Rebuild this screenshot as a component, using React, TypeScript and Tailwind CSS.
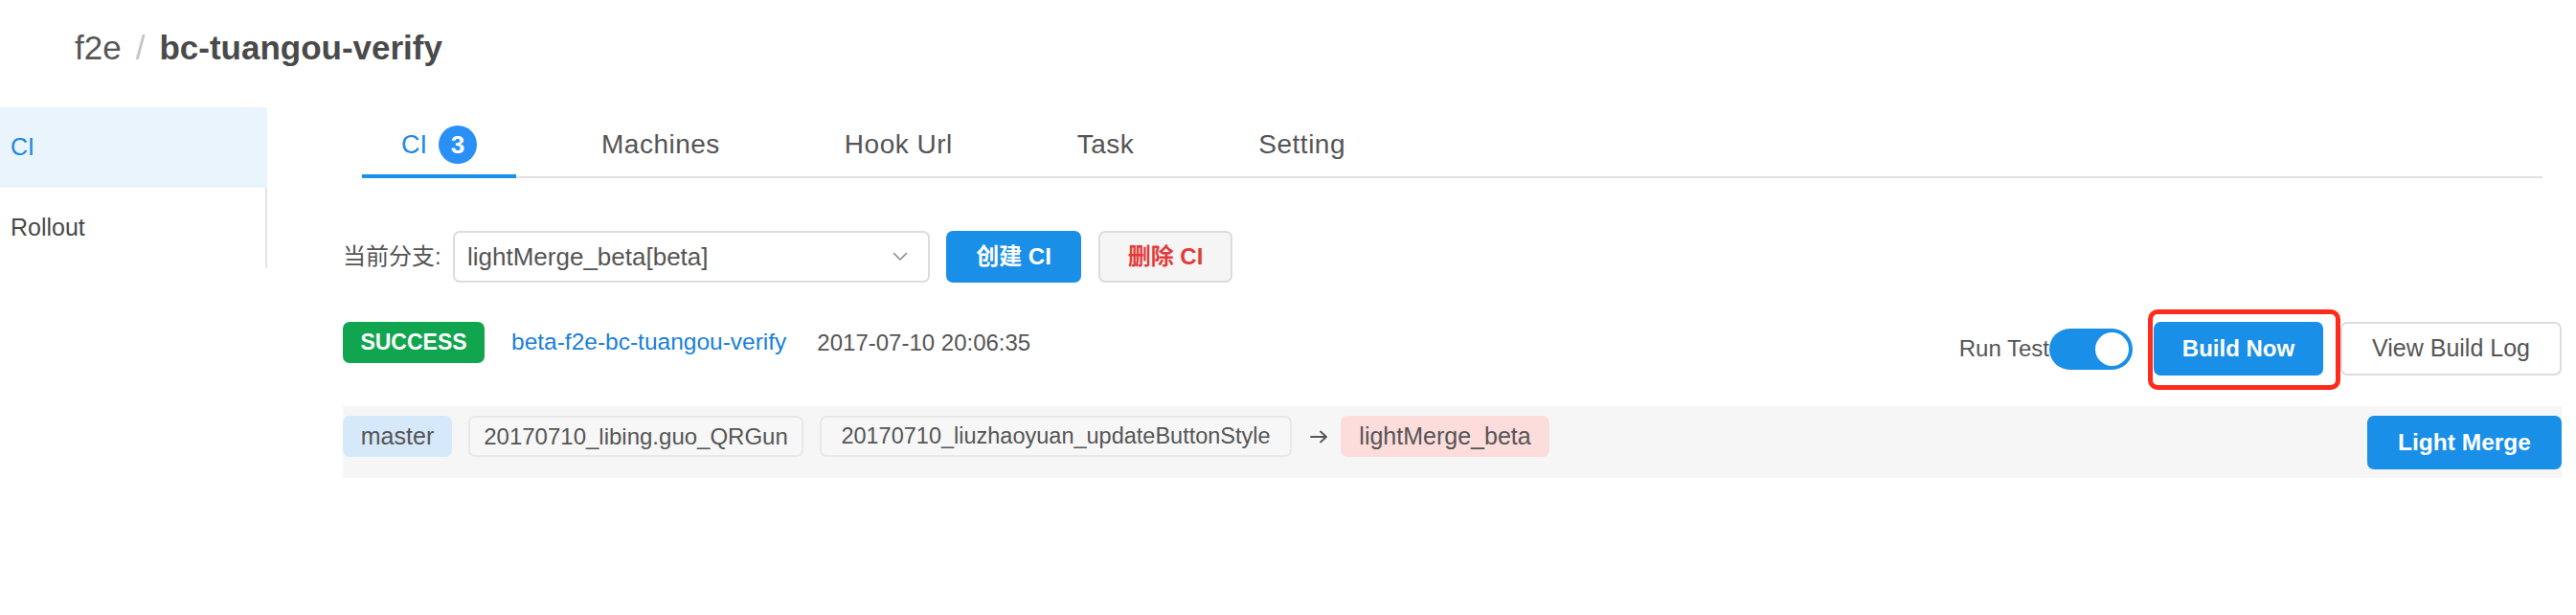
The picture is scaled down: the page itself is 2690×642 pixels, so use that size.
import React from "react";

function Chevron() {
  return (
    <svg width="16" height="10" viewBox="0 0 16 10" fill="none">
      <path d="M1.5 1.5 L8 8 L14.5 1.5" stroke="#8a8a8a" strokeWidth="1.6" strokeLinecap="round" strokeLinejoin="round" />
    </svg>
  );
}

function Arrow() {
  return (
    <svg width="19" height="14" viewBox="0 0 19 14" fill="none" className="ml-[19px]">
      <path d="M1 7 H17 M11 1.5 L17 7 L11 12.5" stroke="#555" strokeWidth="1.8" strokeLinecap="round" strokeLinejoin="round" />
    </svg>
  );
}

export default function App() {
  return (
    <div className="relative w-[2690px] h-[642px] bg-white overflow-hidden font-['Liberation_Sans','Noto_Sans_CJK_SC',sans-serif] text-[#555]">
      {/* header */}
      <div className="pt-[30px] pl-[78px] h-[112px] flex items-start text-[35px] leading-[40px]">
        <span className="text-[#555]">f2e</span>
        <span className="mx-[15px] text-[#c4c4c4]">/</span>
        <span className="font-bold text-[#4a4a4a]">bc-tuangou-verify</span>
      </div>

      <div className="flex">
        {/* sidebar */}
        <aside className="w-[279px] shrink-0">
          <div className="h-[84px] bg-[#eaf4fd] text-[#1a88df] text-[25px] flex items-center pl-[11px]">CI</div>
          <div className="h-[84px] border-r-2 border-[#e6e6e6] text-[25px] flex items-center pl-[11px] text-[#4a4a4a]">Rollout</div>
        </aside>

        {/* main */}
        <main className="ml-[79px] w-[2317px]">
          {/* tabs */}
          <div className="mx-[20px] flex gap-[48px] border-b-2 border-[#e0e0e0] text-[28px] leading-[32px] tracking-[0.5px]">
            <div className="-mb-[2px] px-[41px] pt-[23px] pb-[15px] border-b-4 border-[#1a8fe8] flex items-center text-[#1a8ae5] tracking-normal">
              <span className="text-[27px]">CI</span>
              <span className="ml-[12px] -my-[4px] w-[40px] h-[40px] rounded-full bg-[#2a90f5] text-white font-bold text-[26px] flex items-center justify-center">3</span>
            </div>
            <div className="-mb-[2px] px-[41px] pt-[23px] pb-[15px] border-b-4 border-transparent">Machines</div>
            <div className="-mb-[2px] px-[41px] pt-[23px] pb-[15px] border-b-4 border-transparent">Hook Url</div>
            <div className="-mb-[2px] px-[41px] pt-[23px] pb-[15px] border-b-4 border-transparent">Task</div>
            <div className="-mb-[2px] px-[41px] pt-[23px] pb-[15px] border-b-4 border-transparent">Setting</div>
          </div>

          {/* branch selector */}
          <div className="mt-[55px] flex items-center h-[54px]">
            <span className="w-[115px] text-[24px] text-[#555]">当前分支:</span>
            <div className="w-[498px] h-[54px] border-2 border-[#dcdcdc] rounded-[7px] flex items-center justify-between pl-[13px] pr-[21px] text-[26px] text-[#555]">
              <span>lightMerge_beta[beta]</span>
              <Chevron />
            </div>
            <button className="ml-[17px] w-[141px] h-[54px] rounded-[7px] bg-[#1a8fe8] text-white font-bold text-[24px] flex items-center justify-center">创建 CI</button>
            <button className="ml-[18px] w-[140px] h-[54px] rounded-[7px] bg-[#f5f5f5] border-2 border-[#dcdcdc] text-[#e23b3b] font-bold text-[24px] flex items-center justify-center">删除 CI</button>
          </div>

          {/* status row */}
          <div className="mt-[41px] flex justify-between items-start h-[56px]">
            <div className="flex items-center h-[43px]">
              <span className="w-[148px] h-[43px] rounded-[7px] bg-[#12a550] text-white font-bold text-[23px] flex items-center justify-center">SUCCESS</span>
              <span className="ml-[28px] text-[#1a7fd8] text-[24.5px]">beta-f2e-bc-tuangou-verify</span>
              <span className="ml-[32px] text-[24px] text-[#555]">2017-07-10 20:06:35</span>
            </div>
            <div className="flex items-center h-[56px]">
              <span className="text-[24px] text-[#555]">Run Test</span>
              <div className="relative w-[87px] h-[43px] rounded-full bg-[#1a8fe8]">
                <div className="absolute right-[4px] top-[4px] w-[35px] h-[35px] rounded-full bg-white"></div>
              </div>
              <div className="relative ml-[22px]">
                <button className="w-[177px] h-[56px] rounded-[7px] bg-[#1a8fe8] text-white font-bold text-[24px] flex items-center justify-center">Build Now</button>
                <div className="absolute z-10 -left-[6px] -top-[13px] w-[201px] h-[84px] border-[5px] border-[#ff2b1c] rounded-[10px] pointer-events-none"></div>
              </div>
              <button className="ml-[18px] w-[231px] h-[56px] rounded-[7px] bg-white border-2 border-[#dcdcdc] text-[25px] text-[#555] flex items-center justify-center">View Build Log</button>
            </div>
          </div>

          {/* merge strip */}
          <div className="mt-[32px] h-[75px] bg-[#f6f6f6] flex justify-between items-start pt-[10px]">
            <div className="flex items-center h-[43px]">
              <span className="w-[114px] h-[43px] rounded-[7px] bg-[#d6e9fa] text-[25px] text-[#555] flex items-center justify-center">master</span>
              <span className="ml-[17px] w-[350px] h-[43px] rounded-[7px] bg-[#f7f7f7] border-2 border-[#e8e8e8] text-[24px] text-[#555] flex items-center justify-center">20170710_libing.guo_QRGun</span>
              <span className="ml-[17px] w-[493px] h-[43px] rounded-[7px] bg-[#f7f7f7] border-2 border-[#e8e8e8] text-[23.5px] text-[#555] flex items-center justify-center">20170710_liuzhaoyuan_updateButtonStyle</span>
              <Arrow />
              <span className="ml-[13px] w-[218px] h-[43px] rounded-[7px] bg-[#fddcdc] text-[25px] text-[#555] flex items-center justify-center">lightMerge_beta</span>
            </div>
            <button className="w-[203px] h-[56px] rounded-[7px] bg-[#1a8fe8] text-white font-bold text-[24.5px] flex items-center justify-center">Light Merge</button>
          </div>
        </main>
      </div>
    </div>
  );
}
